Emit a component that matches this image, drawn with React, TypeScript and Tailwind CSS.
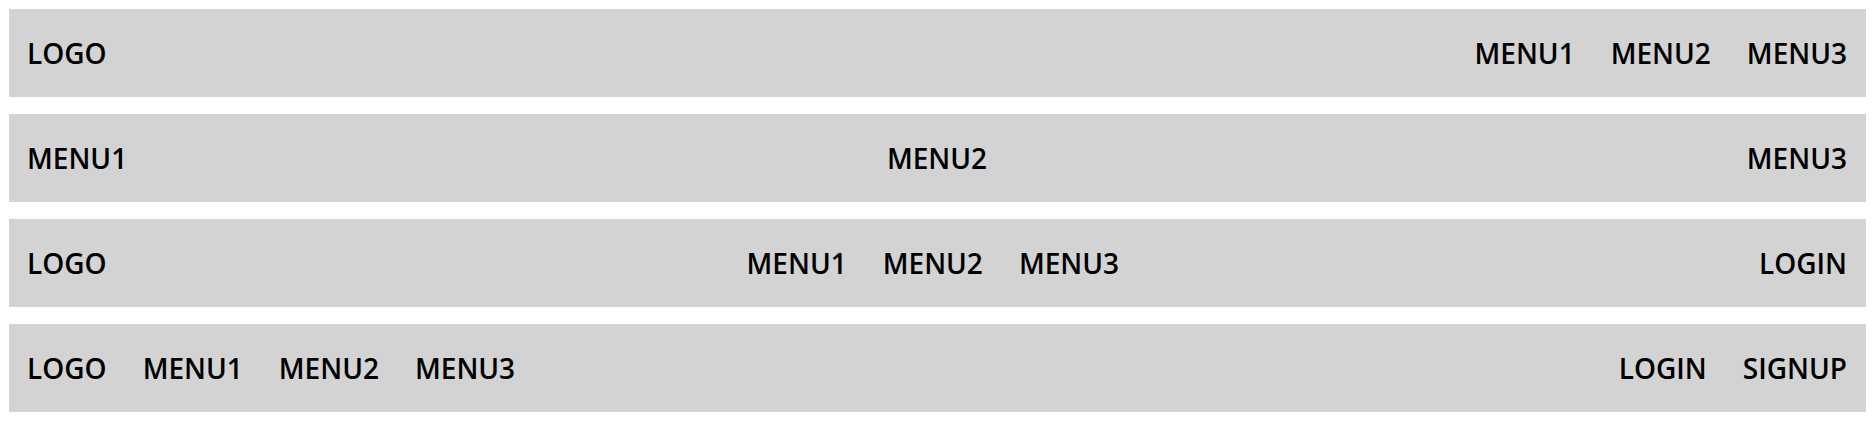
const bar = 'flex items-center h-[88px] mx-[9px] mb-[17px] pl-[18px] pr-[19px] bg-[#d3d3d3]';
const item = 'text-[28px] font-semibold text-black leading-none';

export default function App() {
  return (
    <div className="pt-[9px] bg-white min-h-screen" style={{ fontFamily: '"Open Sans", "Noto Sans", sans-serif' }}>
      {/* logo left, menus right */}
      <nav className={`${bar} justify-between`}>
        <span className={item}>LOGO</span>
        <ul className="flex gap-[36px]">
          <li className={item}>MENU1</li>
          <li className={item}>MENU2</li>
          <li className={item}>MENU3</li>
        </ul>
      </nav>

      {/* menus spread */}
      <nav className={`${bar} justify-between`}>
        <span className={item}>MENU1</span>
        <span className={item}>MENU2</span>
        <span className={item}>MENU3</span>
      </nav>

      {/* logo, centered menus, login */}
      <nav className={`${bar} justify-between`}>
        <span className={item}>LOGO</span>
        <ul className="flex gap-[36px]">
          <li className={item}>MENU1</li>
          <li className={item}>MENU2</li>
          <li className={item}>MENU3</li>
        </ul>
        <span className={item}>LOGIN</span>
      </nav>

      {/* logo + menus left, auth right */}
      <nav className={`${bar} justify-between`}>
        <ul className="flex gap-[36px]">
          <li className={item}>LOGO</li>
          <li className={item}>MENU1</li>
          <li className={item}>MENU2</li>
          <li className={item}>MENU3</li>
        </ul>
        <ul className="flex gap-[36px]">
          <li className={item}>LOGIN</li>
          <li className={item}>SIGNUP</li>
        </ul>
      </nav>
    </div>
  );
}
